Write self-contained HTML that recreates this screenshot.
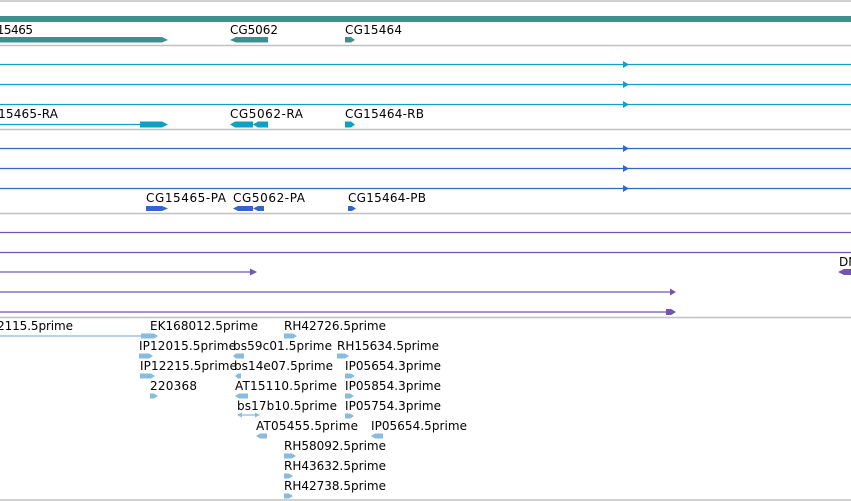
<!DOCTYPE html>
<html><head><meta charset="utf-8"><style>
html,body{margin:0;padding:0;background:#fff;width:851px;height:501px;overflow:hidden}
svg{display:block}
text{font-family:"DejaVu Sans","Liberation Sans",sans-serif;font-size:12px;fill:#000}
</style></head><body>
<svg width="851" height="501" viewBox="0 0 851 501" xmlns="http://www.w3.org/2000/svg">
<g stroke="#c0c0c0" stroke-width="1.5">
<line x1="0" y1="1" x2="851" y2="1"/>
<line x1="0" y1="45.5" x2="851" y2="45.5"/>
<line x1="0" y1="129.5" x2="851" y2="129.5"/>
<line x1="0" y1="213.5" x2="851" y2="213.5"/>
<line x1="0" y1="317.5" x2="851" y2="317.5"/>
<line x1="0" y1="500" x2="851" y2="500"/>
</g>
<rect x="0" y="16" width="851" height="6" fill="#3f8f8f"/>
<g fill="#3f8f8f">
<polygon points="0,37 162,37 168,40 162,42.5 0,42.5"/>
<polygon points="236,37 268,37 268,42.5 236,42.5 230,40"/>
<polygon points="345,37 351,37 355,40 351,42.5 345,42.5"/>
</g>
<text x="-20" y="34" textLength="53">CG15465</text>
<text x="230" y="34" textLength="48">CG5062</text>
<text x="345" y="34" textLength="57">CG15464</text>
<g stroke="#10a0c0" stroke-width="1.2">
<line x1="0" y1="64.5" x2="851" y2="64.5"/>
<line x1="0" y1="84.5" x2="851" y2="84.5"/>
<line x1="0" y1="104.5" x2="851" y2="104.5"/>
<line x1="0" y1="124.5" x2="140" y2="124.5"/>
</g>
<g fill="#10a0c0">
<polygon points="623,61 629,64.5 623,68"/>
<polygon points="623,81 629,84.5 623,88"/>
<polygon points="623,101 629,104.5 623,108"/>
<polygon points="140,121.5 162,121.5 168,124.5 162,127.5 140,127.5"/>
<polygon points="235,121.5 253,121.5 253,127.5 235,127.5 230,124.5"/>
<polygon points="258,121.5 268,121.5 268,127.5 258,127.5 253,124.5"/>
<polygon points="345,121.5 351,121.5 355,124.5 351,127.5 345,127.5"/>
</g>
<text x="-20" y="118" textLength="78">CG15465-RA</text>
<text x="230" y="118" textLength="73">CG5062-RA</text>
<text x="345" y="118" textLength="79">CG15464-RB</text>
<g stroke="#3366cc" stroke-width="1.2">
<line x1="0" y1="148.5" x2="851" y2="148.5"/>
<line x1="0" y1="168.5" x2="851" y2="168.5"/>
<line x1="0" y1="188.5" x2="851" y2="188.5"/>
</g>
<g fill="#3366cc">
<polygon points="623,145 629,148.5 623,152"/>
<polygon points="623,165 629,168.5 623,172"/>
<polygon points="623,185 629,188.5 623,192"/>
<polygon points="146,206 162,206 168,208.5 162,211 146,211"/>
<polygon points="238,206 253,206 253,211 238,211 233,208.5"/>
<polygon points="258,206 264,206 264,211 258,211 253,208.5"/>
<polygon points="348,206 352,206 356,208.5 352,211 348,211"/>
</g>
<text x="146" y="202" textLength="80">CG15465-PA</text>
<text x="233" y="202" textLength="72">CG5062-PA</text>
<text x="348" y="202" textLength="78">CG15464-PB</text>
<g stroke="#7355b0" stroke-width="1.2">
<line x1="0" y1="232.5" x2="851" y2="232.5"/>
<line x1="0" y1="252.5" x2="851" y2="252.5"/>
<line x1="0" y1="272" x2="250" y2="272"/>
<line x1="0" y1="292" x2="670" y2="292"/>
<line x1="0" y1="312" x2="670" y2="312"/>
</g>
<g fill="#7355b0">
<polygon points="250,268.5 257,272 250,275.5"/>
<polygon points="670,288.5 676,292 670,295.5"/>
<polygon points="666,309 671,309 676,312 671,315 666,315"/>
<polygon points="844,269 851,269 851,275 844,275 838,272"/>
</g>
<text x="839" y="266">DN</text>
<g stroke="#88bbdd" stroke-width="1.2">
<line x1="0" y1="336" x2="142" y2="336"/>
<line x1="238" y1="415" x2="258" y2="415"/>
</g>
<g fill="#88bbdd">
<polygon points="141,333.5 150,333.5 155,336 150,338.5 141,338.5"/>
<polygon points="150,333.5 154,333.5 158,336 154,338.5 150,338.5"/>
<polygon points="284,333.5 293,333.5 297,336 293,338.5 284,338.5"/>
<polygon points="139,353.5 149,353.5 153,356 149,358.5 139,358.5"/>
<polygon points="236,353.5 244,353.5 244,358.5 236,358.5 233,356"/>
<polygon points="337,353.5 345,353.5 349,356 345,358.5 337,358.5"/>
<polygon points="140,373.5 151,373.5 155,376 151,378.5 140,378.5"/>
<polygon points="238,373.5 241,373.5 241,378.5 238,378.5 235,376"/>
<polygon points="345,373.5 351,373.5 355,376 351,378.5 345,378.5"/>
<polygon points="150,393.5 154,393.5 158,396 154,398.5 150,398.5"/>
<polygon points="239,393.5 248,393.5 248,398.5 239,398.5 235,396"/>
<polygon points="345,393.5 350,393.5 354,396 350,398.5 345,398.5"/>
<polygon points="237,415 242,412.5 242,417.5"/>
<polygon points="260,415 255,412.5 255,417.5"/>
<polygon points="345,413.5 350,413.5 354,416 350,418.5 345,418.5"/>
<polygon points="260,433.5 267,433.5 267,438.5 260,438.5 256,436"/>
<polygon points="375,433.5 383,433.5 383,438.5 375,438.5 371,436"/>
<polygon points="284,453.5 292,453.5 296,456 292,458.5 284,458.5"/>
<polygon points="284,473.5 289,473.5 293,476 289,478.5 284,478.5"/>
<polygon points="284,493.5 289,493.5 293,496 289,498.5 284,498.5"/>
</g>
<text x="-21" y="330" textLength="94">IP12115.5prime</text>
<text x="150" y="330" textLength="108">EK168012.5prime</text>
<text x="284" y="330" textLength="102">RH42726.5prime</text>
<text x="139" y="350" textLength="97">IP12015.5prime</text>
<text x="233" y="350" textLength="99">bs59c01.5prime</text>
<text x="337" y="350" textLength="102">RH15634.5prime</text>
<text x="140" y="370" textLength="97">IP12215.5prime</text>
<text x="234" y="370" textLength="99">bs14e07.5prime</text>
<text x="345" y="370" textLength="96">IP05654.3prime</text>
<text x="150" y="390" textLength="47">220368</text>
<text x="235" y="390" textLength="102">AT15110.5prime</text>
<text x="345" y="390" textLength="96">IP05854.3prime</text>
<text x="237" y="410" textLength="100">bs17b10.5prime</text>
<text x="345" y="410" textLength="96">IP05754.3prime</text>
<text x="256" y="430" textLength="102">AT05455.5prime</text>
<text x="371" y="430" textLength="96">IP05654.5prime</text>
<text x="284" y="450" textLength="102">RH58092.5prime</text>
<text x="284" y="470" textLength="102">RH43632.5prime</text>
<text x="284" y="490" textLength="102">RH42738.5prime</text>
</svg>
</body></html>
